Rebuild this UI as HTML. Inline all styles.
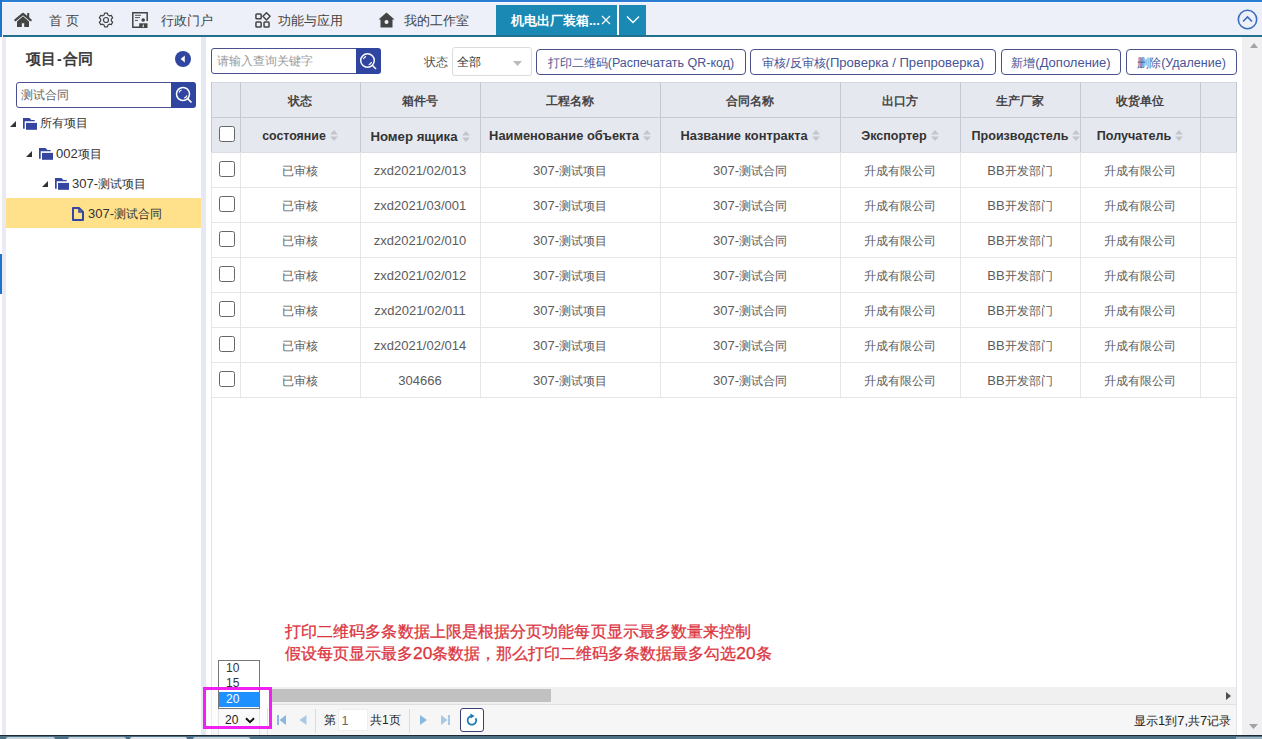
<!DOCTYPE html>
<html><head><meta charset="utf-8">
<style>
*{box-sizing:border-box;margin:0;padding:0}
html,body{width:1262px;height:739px;overflow:hidden;background:#fff;font-family:"Liberation Sans",sans-serif;color:#333}
.a{position:absolute}
.t{position:absolute;white-space:nowrap;line-height:1}
/* header */
#hdr{left:0;top:0;width:1262px;height:35px;background:#edf0f8}
#topline{left:0;top:0;width:1262px;height:2px;background:#2b7cd3}
#leftbar{left:0;top:0;width:2px;height:37px;background:#1f74c8}
#hdrb{left:3px;top:35px;width:1259px;height:2px;background:#22708c}
.hl{font-size:13px;color:#444}
#tab{left:496px;top:5px;width:121px;height:30px;background:#1a8ab5}
#tabdd{left:619px;top:5px;width:27px;height:30px;background:#1a8ab5}
/* sidebar */
#lstrip{left:2px;top:37px;width:4px;height:698px;background:#e9eaf3}
#div{left:201px;top:37px;width:5px;height:698px;background:#e6e9f3}
.inp{border:1px solid #4a4f8f;border-radius:3px;background:#fff}
.sbtn{background:#2f45a0;border-radius:0 3px 3px 0}
.tree{font-size:12px;color:#333}
/* main */
.btn{position:absolute;top:49px;height:26px;border:1px solid #4a5088;border-radius:4px;background:#fff;font-size:12px;color:#465496;line-height:26px;text-align:center;white-space:nowrap}
#tbl{left:211px;top:82px}
.hc{position:absolute;background:#e6e8f0;border-right:1px solid #cfd2dc;border-bottom:1px solid #cfd2dc;text-align:center;font-weight:bold;color:#333}
.dc{position:absolute;border-right:1px solid #e3e3e3;border-bottom:1px solid #e3e3e3;text-align:center;color:#555;font-size:13px;line-height:34px;white-space:nowrap}
.cb{position:absolute;width:16px;height:16px;border:1px solid #666;border-radius:2.5px;background:#fff}
.sort{position:absolute;width:8px;height:11px}
.hc1{font-size:12px;font-weight:bold;color:#444;text-align:center}
.hc2{font-size:12.6px;font-weight:bold;color:#333;text-align:center}
.srt{margin-left:4px;vertical-align:-1px}
.dc1{font-size:12px;color:#5c5c5c;text-align:center}
.l{font-size:108.3%}
.btn .l{font-size:104.5%}
</style></head><body>
<div class="a" id="hdr"></div>
<div class="a" id="topline"></div>
<div class="a" style="left:2px;top:2px;width:1260px;height:1px;background:#f3f8fc"></div>
<div class="a" id="leftbar"></div>
<div class="a" id="hdrb"></div>

<!-- header icons -->
<svg class="a" style="left:14px;top:12px" width="18" height="16" viewBox="0 0 18 16">
 <path d="M1.4 8.2L9 1.8L16.6 8.2" fill="none" stroke="#444" stroke-width="2.2" stroke-linecap="round" stroke-linejoin="round"/>
 <rect x="13.2" y="1" width="2" height="4.8" fill="#444"/>
 <path d="M3 9.4L9 4.3L15 9.4V15H10.2V11.3H7.8V15H3Z" fill="#444"/>
</svg>
<div class="t hl" style="left:49px;top:14px">首 页</div>
<svg class="a" style="left:98px;top:12px" width="16" height="16" viewBox="0 0 16 16">
 <path d="M6.10 2.95 L6.61 1.14 L9.39 1.14 L9.90 2.95 L11.43 3.83 L13.25 3.37 L14.64 5.77 L13.33 7.12 L13.33 8.88 L14.64 10.23 L13.25 12.63 L11.43 12.17 L9.90 13.05 L9.39 14.86 L6.61 14.86 L6.10 13.05 L4.57 12.17 L2.75 12.63 L1.36 10.23 L2.67 8.88 L2.67 7.12 L1.36 5.77 L2.75 3.37 L4.57 3.83Z" fill="none" stroke="#444" stroke-width="1.2" stroke-linejoin="round"/>
 <circle cx="8" cy="8" r="2.5" fill="none" stroke="#444" stroke-width="1.2"/>
</svg>
<svg class="a" style="left:132px;top:12px" width="16" height="16" viewBox="0 0 16 16">
 <path d="M8 15.2H0.8V0.8H15.2V9" fill="none" stroke="#444" stroke-width="1.5"/>
 <path d="M3 3.3h6M3 5.6h5M3 8.4h3" stroke="#555" stroke-width="1"/>
 <circle cx="11.2" cy="8" r="1.8" fill="#444"/>
 <path d="M7.2 16 L7.2 11.3 L15.5 11.3 L15.5 16Z" fill="#444"/>
 <path d="M11.2 11.3L10.5 14.5L11.2 15.5L11.9 14.5Z" fill="#edf0f8"/>
</svg>
<div class="t hl" style="left:161px;top:14px">行政门户</div>
<svg class="a" style="left:255px;top:12px" width="17" height="17" viewBox="0 0 17 17">
 <rect x="0.95" y="1.95" width="5.2" height="4.8" rx="0.8" fill="none" stroke="#444" stroke-width="1.5"/>
 <rect x="0.95" y="10.05" width="5.2" height="5" rx="0.8" fill="none" stroke="#444" stroke-width="1.5"/>
 <rect x="9.05" y="10.05" width="5" height="5" rx="0.8" fill="none" stroke="#444" stroke-width="1.5"/>
 <path d="M11.5 0.7L15.1 4.3L11.5 7.9L7.9 4.3Z" fill="none" stroke="#444" stroke-width="1.4" stroke-linejoin="round"/>
</svg>
<div class="t hl" style="left:278px;top:14px">功能与应用</div>
<svg class="a" style="left:378px;top:12px" width="17" height="16" viewBox="0 0 17 16">
 <path d="M8.5 0.5 L0.5 7.5 L2.5 7.5 L2.5 15.5 L14.5 15.5 L14.5 7.5 L16.5 7.5 Z" fill="#444"/>
 <circle cx="8.5" cy="10" r="2" fill="#edf0f8"/>
</svg>
<div class="t hl" style="left:404px;top:14px">我的工作室</div>
<div class="a" id="tab"></div>
<div class="t" style="left:511px;top:13.5px;font-size:13px;font-weight:bold;color:#fff">机电出厂装箱...</div>
<svg class="a" style="left:601px;top:15px" width="10" height="10" viewBox="0 0 10 10"><path d="M1 1L9 9M9 1L1 9" stroke="#fff" stroke-width="1.2"/></svg>
<div class="a" style="left:617px;top:5px;width:2px;height:30px;background:#fbfdff"></div>
<div class="a" id="tabdd"></div>
<svg class="a" style="left:626px;top:15px" width="14" height="9" viewBox="0 0 14 9"><path d="M1 1.5L7 7.5L13 1.5" fill="none" stroke="#fff" stroke-width="1.4"/></svg>
<svg class="a" style="left:1236.5px;top:8.5px" width="21" height="21" viewBox="0 0 21 21"><circle cx="10.5" cy="10.5" r="9.2" fill="none" stroke="#3a6cc0" stroke-width="1.6"/><path d="M6 12.5L10.5 8L15 12.5" fill="none" stroke="#3a6cc0" stroke-width="1.6"/></svg>

<!-- sidebar -->
<div class="a" id="lstrip"></div>
<div class="a" style="left:0;top:254px;width:2px;height:40px;background:#1f74c8"></div>
<div class="a" id="div"></div>
<div class="t" style="left:25.5px;top:52px;font-size:14.5px;color:#333;-webkit-text-stroke:0.55px #333">项目<span style="font-size:14px;font-weight:bold;-webkit-text-stroke:0;margin:0 1.6px">-</span>合同</div>
<svg class="a" style="left:175px;top:51px" width="16" height="16" viewBox="0 0 16 16"><circle cx="8" cy="8" r="8" fill="#2f45a0"/><path d="M9.8 4.5L5.6 8L9.8 11.5Z" fill="#fff"/></svg>
<div class="a inp" style="left:16px;top:82px;width:160px;height:26px"></div>
<div class="a sbtn" style="left:171px;top:82px;width:25px;height:26px"></div>
<svg class="a" style="left:174px;top:85px" width="20" height="20" viewBox="0 0 20 20"><circle cx="9" cy="9" r="6.5" fill="none" stroke="#fff" stroke-width="1.5"/><path d="M5.05 7.56A4.2 4.2 0 0 1 7.56 5.05 M12.95 10.44A4.2 4.2 0 0 1 10.09 13.06" fill="none" stroke="#fff" stroke-width="1.1"/><path d="M13.6 13.6L17.5 17.5" stroke="#fff" stroke-width="1.6"/></svg>
<div class="t" style="left:21px;top:89px;font-size:12px;color:#666">测试合同</div>


<!-- tree -->
<svg class="a" style="left:10px;top:121px" width="6" height="6" viewBox="0 0 6 6"><path d="M6 0L6 6L0 6Z" fill="#333"/></svg>
<svg class="a" style="left:23px;top:118px" width="14" height="12" viewBox="0 0 14 12"><path d="M0 0H6.5L8.3 2H11.7V3.3H1.7V10.8H0Z" fill="#3446a0"/><rect x="3" y="4.9" width="11" height="6.9" fill="#3446a0"/></svg>
<div class="t tree" style="left:40px;top:117px">所有项目</div>
<svg class="a" style="left:26px;top:151px" width="6" height="6" viewBox="0 0 6 6"><path d="M6 0L6 6L0 6Z" fill="#333"/></svg>
<svg class="a" style="left:39px;top:148px" width="14" height="12" viewBox="0 0 14 12"><path d="M0 0H6.5L8.3 2H11.7V3.3H1.7V10.8H0Z" fill="#3446a0"/><rect x="3" y="4.9" width="11" height="6.9" fill="#3446a0"/></svg>
<div class="t tree" style="left:56px;top:147px"><span class="l">002</span>项目</div>
<svg class="a" style="left:42px;top:181px" width="6" height="6" viewBox="0 0 6 6"><path d="M6 0L6 6L0 6Z" fill="#333"/></svg>
<svg class="a" style="left:55px;top:178px" width="14" height="12" viewBox="0 0 14 12"><path d="M0 0H6.5L8.3 2H11.7V3.3H1.7V10.8H0Z" fill="#3446a0"/><rect x="3" y="4.9" width="11" height="6.9" fill="#3446a0"/></svg>
<div class="t tree" style="left:72px;top:177px"><span class="l">307-</span>测试项目</div>
<div class="a" style="left:6px;top:198px;width:195px;height:30px;background:#ffe18c"></div>
<svg class="a" style="left:72px;top:207px" width="12" height="14" viewBox="0 0 12 14"><path d="M1 1H7L11 5V13H1Z" fill="none" stroke="#3446a0" stroke-width="2" stroke-linejoin="round"/><path d="M7 1V5H11" fill="none" stroke="#3446a0" stroke-width="1.6"/></svg>
<div class="t tree" style="left:88px;top:207px"><span class="l">307-</span>测试合同</div>

<!-- main toolbar -->
<div class="a inp" style="left:211px;top:48px;width:150px;height:26px"></div>
<div class="a sbtn" style="left:356px;top:48px;width:25px;height:26px"></div>
<svg class="a" style="left:358px;top:51px" width="20" height="20" viewBox="0 0 20 20"><circle cx="9.5" cy="9.5" r="6.8" fill="none" stroke="#fff" stroke-width="1.5"/><path d="M5.37 8.00A4.4 4.4 0 0 1 8.00 5.37 M13.63 11.00A4.4 4.4 0 0 1 10.64 13.75" fill="none" stroke="#fff" stroke-width="1.1"/><path d="M14.3 14.3L18 18" stroke="#fff" stroke-width="1.6"/></svg>
<div class="t" style="left:217px;top:55px;font-size:12px;color:#9a9a9a">请输入查询关键字</div>
<div class="t" style="left:424px;top:56px;font-size:12px;color:#555">状态</div>
<div class="a" style="left:452px;top:47px;width:80px;height:29px;border:1px solid #dcdcdc;border-radius:3px;background:#fff"></div>
<div class="t" style="left:457px;top:56px;font-size:12px;color:#333">全部</div>
<svg class="a" style="left:513px;top:61px" width="9" height="5" viewBox="0 0 9 5"><path d="M0 0H9L4.5 5Z" fill="#bbb"/></svg>
<div class="btn" style="left:536px;width:210px">打印二维码<span class="l" style="font-size:12.5px">(Распечатать QR-код)</span></div>
<div class="btn" style="left:750px;width:246px">审核<span class="l" style="font-size:13px">/</span>反审核<span class="l" style="font-size:13.1px">(Проверка / Препроверка)</span></div>
<div class="btn" style="left:1001px;width:120px">新增<span class="l" style="font-size:13px">(Дополение)</span></div>
<div class="btn" style="left:1126px;width:111px">删除<span class="l" style="font-size:12.5px">(Удаление)</span></div>

<!-- table -->
<div class="a" style="left:211px;top:82px;width:1026px;height:70px;background:#e6e8f0"></div>
<div class="a" style="left:211px;top:82px;width:1026px;height:1px;background:#d6d8e0"></div>
<div class="a" style="left:211px;top:117px;width:1026px;height:1px;background:#c9cbd4"></div>
<div class="a" style="left:211px;top:152px;width:1026px;height:1px;background:#dcdee6"></div>
<div class="a" style="left:211px;top:187px;width:1026px;height:1px;background:#e6e6e6"></div>
<div class="a" style="left:211px;top:222px;width:1026px;height:1px;background:#e6e6e6"></div>
<div class="a" style="left:211px;top:257px;width:1026px;height:1px;background:#e6e6e6"></div>
<div class="a" style="left:211px;top:292px;width:1026px;height:1px;background:#e6e6e6"></div>
<div class="a" style="left:211px;top:327px;width:1026px;height:1px;background:#e6e6e6"></div>
<div class="a" style="left:211px;top:362px;width:1026px;height:1px;background:#e6e6e6"></div>
<div class="a" style="left:211px;top:397px;width:1026px;height:1px;background:#e6e6e6"></div>
<div class="a" style="left:211px;top:82px;width:1px;height:70px;background:#c6c8d1"></div>
<div class="a" style="left:211px;top:152px;width:1px;height:245px;background:#e6e6e6"></div>
<div class="a" style="left:240px;top:82px;width:1px;height:70px;background:#c6c8d1"></div>
<div class="a" style="left:240px;top:152px;width:1px;height:245px;background:#e6e6e6"></div>
<div class="a" style="left:360px;top:82px;width:1px;height:70px;background:#c6c8d1"></div>
<div class="a" style="left:360px;top:152px;width:1px;height:245px;background:#e6e6e6"></div>
<div class="a" style="left:480px;top:82px;width:1px;height:70px;background:#c6c8d1"></div>
<div class="a" style="left:480px;top:152px;width:1px;height:245px;background:#e6e6e6"></div>
<div class="a" style="left:660px;top:82px;width:1px;height:70px;background:#c6c8d1"></div>
<div class="a" style="left:660px;top:152px;width:1px;height:245px;background:#e6e6e6"></div>
<div class="a" style="left:840px;top:82px;width:1px;height:70px;background:#c6c8d1"></div>
<div class="a" style="left:840px;top:152px;width:1px;height:245px;background:#e6e6e6"></div>
<div class="a" style="left:960px;top:82px;width:1px;height:70px;background:#c6c8d1"></div>
<div class="a" style="left:960px;top:152px;width:1px;height:245px;background:#e6e6e6"></div>
<div class="a" style="left:1080px;top:82px;width:1px;height:70px;background:#c6c8d1"></div>
<div class="a" style="left:1080px;top:152px;width:1px;height:245px;background:#e6e6e6"></div>
<div class="a" style="left:1200px;top:82px;width:1px;height:70px;background:#c6c8d1"></div>
<div class="a" style="left:1200px;top:152px;width:1px;height:245px;background:#e6e6e6"></div>
<div class="a" style="left:1236px;top:82px;width:1px;height:70px;background:#c6c8d1"></div>
<div class="a" style="left:1236px;top:152px;width:1px;height:245px;background:#e6e6e6"></div>
<div class="t hc1" style="left:240px;width:120px;top:95px">状态</div>
<div class="t hc2" style="left:240px;width:120px;top:130px"><span style="font-size:12.4px">состояние</span><svg class="srt" width="8" height="11" viewBox="0 0 8 11"><path d="M4 0L8 4.5H0Z M0 6.5H8L4 11Z" fill="#c4c6cc"/></svg></div>
<div class="t hc1" style="left:360px;width:120px;top:95px">箱件号</div>
<div class="t hc2" style="left:360px;width:120px;top:130px"><span style="font-size:13.2px">Номер ящика</span><svg class="srt" width="8" height="11" viewBox="0 0 8 11"><path d="M4 0L8 4.5H0Z M0 6.5H8L4 11Z" fill="#c4c6cc"/></svg></div>
<div class="t hc1" style="left:480px;width:180px;top:95px">工程名称</div>
<div class="t hc2" style="left:480px;width:180px;top:130px"><span style="font-size:12.85px">Наименование объекта</span><svg class="srt" width="8" height="11" viewBox="0 0 8 11"><path d="M4 0L8 4.5H0Z M0 6.5H8L4 11Z" fill="#c4c6cc"/></svg></div>
<div class="t hc1" style="left:660px;width:180px;top:95px">合同名称</div>
<div class="t hc2" style="left:660px;width:180px;top:130px"><span style="font-size:12.85px">Название контракта</span><svg class="srt" width="8" height="11" viewBox="0 0 8 11"><path d="M4 0L8 4.5H0Z M0 6.5H8L4 11Z" fill="#c4c6cc"/></svg></div>
<div class="t hc1" style="left:840px;width:120px;top:95px">出口方</div>
<div class="t hc2" style="left:840px;width:120px;top:130px"><span style="font-size:12.55px">Экспортер</span><svg class="srt" width="8" height="11" viewBox="0 0 8 11"><path d="M4 0L8 4.5H0Z M0 6.5H8L4 11Z" fill="#c4c6cc"/></svg></div>
<div class="t hc1" style="left:960px;width:120px;top:95px">生产厂家</div>
<div class="t hc2" style="left:966px;width:120px;top:130px"><span style="font-size:12.55px">Производстель</span><svg class="srt" width="8" height="11" viewBox="0 0 8 11"><path d="M4 0L8 4.5H0Z M0 6.5H8L4 11Z" fill="#c4c6cc"/></svg></div>
<div class="t hc1" style="left:1080px;width:120px;top:95px">收货单位</div>
<div class="t hc2" style="left:1080px;width:120px;top:130px"><span style="font-size:12.6px">Получатель</span><svg class="srt" width="8" height="11" viewBox="0 0 8 11"><path d="M4 0L8 4.5H0Z M0 6.5H8L4 11Z" fill="#c4c6cc"/></svg></div>
<div class="cb" style="left:219px;top:126px"></div>
<div class="cb" style="left:219px;top:161px"></div>
<div class="t dc1" style="left:240px;width:120px;top:165px">已审核</div>
<div class="t dc1" style="left:360px;width:120px;top:164px"><span class="l">zxd2021/02/013</span></div>
<div class="t dc1" style="left:480px;width:180px;top:164px"><span class="l">307-</span>测试项目</div>
<div class="t dc1" style="left:660px;width:180px;top:164px"><span class="l">307-</span>测试合同</div>
<div class="t dc1" style="left:840px;width:120px;top:165px">升成有限公司</div>
<div class="t dc1" style="left:960px;width:120px;top:164px"><span class="l">BB</span>开发部门</div>
<div class="t dc1" style="left:1080px;width:120px;top:165px">升成有限公司</div>
<div class="cb" style="left:219px;top:196px"></div>
<div class="t dc1" style="left:240px;width:120px;top:200px">已审核</div>
<div class="t dc1" style="left:360px;width:120px;top:199px"><span class="l">zxd2021/03/001</span></div>
<div class="t dc1" style="left:480px;width:180px;top:199px"><span class="l">307-</span>测试项目</div>
<div class="t dc1" style="left:660px;width:180px;top:199px"><span class="l">307-</span>测试合同</div>
<div class="t dc1" style="left:840px;width:120px;top:200px">升成有限公司</div>
<div class="t dc1" style="left:960px;width:120px;top:199px"><span class="l">BB</span>开发部门</div>
<div class="t dc1" style="left:1080px;width:120px;top:200px">升成有限公司</div>
<div class="cb" style="left:219px;top:231px"></div>
<div class="t dc1" style="left:240px;width:120px;top:235px">已审核</div>
<div class="t dc1" style="left:360px;width:120px;top:234px"><span class="l">zxd2021/02/010</span></div>
<div class="t dc1" style="left:480px;width:180px;top:234px"><span class="l">307-</span>测试项目</div>
<div class="t dc1" style="left:660px;width:180px;top:234px"><span class="l">307-</span>测试合同</div>
<div class="t dc1" style="left:840px;width:120px;top:235px">升成有限公司</div>
<div class="t dc1" style="left:960px;width:120px;top:234px"><span class="l">BB</span>开发部门</div>
<div class="t dc1" style="left:1080px;width:120px;top:235px">升成有限公司</div>
<div class="cb" style="left:219px;top:266px"></div>
<div class="t dc1" style="left:240px;width:120px;top:270px">已审核</div>
<div class="t dc1" style="left:360px;width:120px;top:269px"><span class="l">zxd2021/02/012</span></div>
<div class="t dc1" style="left:480px;width:180px;top:269px"><span class="l">307-</span>测试项目</div>
<div class="t dc1" style="left:660px;width:180px;top:269px"><span class="l">307-</span>测试合同</div>
<div class="t dc1" style="left:840px;width:120px;top:270px">升成有限公司</div>
<div class="t dc1" style="left:960px;width:120px;top:269px"><span class="l">BB</span>开发部门</div>
<div class="t dc1" style="left:1080px;width:120px;top:270px">升成有限公司</div>
<div class="cb" style="left:219px;top:301px"></div>
<div class="t dc1" style="left:240px;width:120px;top:305px">已审核</div>
<div class="t dc1" style="left:360px;width:120px;top:304px"><span class="l">zxd2021/02/011</span></div>
<div class="t dc1" style="left:480px;width:180px;top:304px"><span class="l">307-</span>测试项目</div>
<div class="t dc1" style="left:660px;width:180px;top:304px"><span class="l">307-</span>测试合同</div>
<div class="t dc1" style="left:840px;width:120px;top:305px">升成有限公司</div>
<div class="t dc1" style="left:960px;width:120px;top:304px"><span class="l">BB</span>开发部门</div>
<div class="t dc1" style="left:1080px;width:120px;top:305px">升成有限公司</div>
<div class="cb" style="left:219px;top:336px"></div>
<div class="t dc1" style="left:240px;width:120px;top:340px">已审核</div>
<div class="t dc1" style="left:360px;width:120px;top:339px"><span class="l">zxd2021/02/014</span></div>
<div class="t dc1" style="left:480px;width:180px;top:339px"><span class="l">307-</span>测试项目</div>
<div class="t dc1" style="left:660px;width:180px;top:339px"><span class="l">307-</span>测试合同</div>
<div class="t dc1" style="left:840px;width:120px;top:340px">升成有限公司</div>
<div class="t dc1" style="left:960px;width:120px;top:339px"><span class="l">BB</span>开发部门</div>
<div class="t dc1" style="left:1080px;width:120px;top:340px">升成有限公司</div>
<div class="cb" style="left:219px;top:371px"></div>
<div class="t dc1" style="left:240px;width:120px;top:375px">已审核</div>
<div class="t dc1" style="left:360px;width:120px;top:374px"><span class="l">304666</span></div>
<div class="t dc1" style="left:480px;width:180px;top:374px"><span class="l">307-</span>测试项目</div>
<div class="t dc1" style="left:660px;width:180px;top:374px"><span class="l">307-</span>测试合同</div>
<div class="t dc1" style="left:840px;width:120px;top:375px">升成有限公司</div>
<div class="t dc1" style="left:960px;width:120px;top:374px"><span class="l">BB</span>开发部门</div>
<div class="t dc1" style="left:1080px;width:120px;top:375px">升成有限公司</div>

<!-- panel borders -->
<div class="a" style="left:211px;top:397px;width:1px;height:338px;background:#e3e3e6"></div>
<div class="a" style="left:1236px;top:397px;width:1px;height:338px;background:#e3e3e6"></div>
<!-- vertical scrollbar -->
<div class="a" style="left:1242px;top:37px;width:20px;height:698px;background:#f0f0f3"></div>
<svg class="a" style="left:1250px;top:43px" width="8" height="5" viewBox="0 0 8 5"><path d="M4 0L8 5H0Z" fill="#a3a3a3"/></svg>
<svg class="a" style="left:1249px;top:724px" width="9" height="5" viewBox="0 0 9 5"><path d="M0 0H9L4.5 5Z" fill="#a3a3a3"/></svg>
<!-- red text -->
<div class="t" style="left:285px;top:624px;font-size:16px;color:#dc3540;-webkit-text-stroke:0.3px #dc3540;letter-spacing:0.08px">打印二维码多条数据上限是根据分页功能每页显示最多数量来控制</div>
<div class="t" style="left:285px;top:645px;font-size:16px;color:#dc3540;-webkit-text-stroke:0.3px #dc3540">假设每页显示最多<span class="l">20</span>条数据，那么打印二维码多条数据最多勾选<span class="l">20</span>条</div>
<!-- h scrollbar -->
<div class="a" style="left:212px;top:687px;width:1024px;height:17px;background:#f0f0f0"></div>
<div class="a" style="left:212px;top:689px;width:339px;height:13px;background:#c1c1c1"></div>
<svg class="a" style="left:1226px;top:692px" width="5" height="8" viewBox="0 0 5 8"><path d="M0 0L5 4L0 8Z" fill="#505050"/></svg>
<div class="a" style="left:212px;top:704px;width:1024px;height:1px;background:#e0e0e0"></div>
<!-- pagination -->
<div class="a" style="left:212px;top:705px;width:1024px;height:30px;background:#f6f6f6"></div>
<div class="a" style="left:206px;top:690px;width:63px;height:36px;background:#fdfdfd"></div>
<div class="a" style="left:211px;top:690px;width:1px;height:45px;background:#ececec"></div>
<div class="a" style="left:218px;top:708px;width:42px;height:27px;border:1px solid #e2e2e2;border-bottom:none;background:#fafafa"></div>
<div class="t" style="left:225px;top:714px;font-size:12px;color:#222">20</div>
<svg class="a" style="left:245px;top:717px" width="10" height="7" viewBox="0 0 10 7"><path d="M1 1.2L5 5.2L9 1.2" fill="none" stroke="#111" stroke-width="2"/></svg>
<div class="a" style="left:267px;top:708px;width:1px;height:27px;background:#e0e0e0"></div>
<svg class="a" style="left:277px;top:715px" width="9" height="10" viewBox="0 0 9 10"><rect x="0" y="0" width="2" height="10" fill="#8ab8e0"/><path d="M9 0V10L2.5 5Z" fill="#8ab8e0"/></svg>
<svg class="a" style="left:299px;top:715px" width="8" height="10" viewBox="0 0 8 10"><path d="M7.5 0V10L0.5 5Z" fill="#a8c8e6"/></svg>
<div class="a" style="left:315px;top:709px;width:1px;height:24px;background:#dcdcdc"></div>
<div class="t" style="left:324px;top:714px;font-size:12px;color:#222">第</div>
<div class="a" style="left:338px;top:709px;width:30px;height:22px;border:1px solid #eee;background:#fff"></div>
<div class="t" style="left:341.5px;top:715px;font-size:12.5px;color:#666">1</div>
<div class="t" style="left:370px;top:714px;font-size:12px;color:#222">共1页</div>
<div class="a" style="left:409px;top:709px;width:1px;height:24px;background:#dcdcdc"></div>
<svg class="a" style="left:420px;top:715px" width="7" height="10" viewBox="0 0 7 10"><path d="M0 0V10L7 5Z" fill="#8ab8e0"/></svg>
<svg class="a" style="left:441px;top:715px" width="9" height="10" viewBox="0 0 9 10"><path d="M0 0V10L6.5 5Z" fill="#a8c8e6"/><rect x="7" y="0" width="2" height="10" fill="#a8c8e6"/></svg>
<div class="a" style="left:460px;top:708px;width:24px;height:24px;border:1px solid #3c4070;border-radius:3px;background:#fff"></div>
<svg class="a" style="left:465px;top:713px" width="14" height="14" viewBox="0 0 14 14"><path d="M10.6 5.2A4.3 4.3 0 1 1 6.6 3.1" fill="none" stroke="#1e7ab0" stroke-width="1.8"/><path d="M5.4 0.6L9.6 3.0L5.6 5.6Z" fill="#1e7ab0"/></svg>
<div class="t" style="left:1134px;top:714px;font-size:12px;color:#222">显示<span class="l">1</span>到<span class="l">7,</span>共<span class="l">7</span>记录</div>
<!-- dropdown list -->
<div class="a" style="left:218px;top:660px;width:42px;height:49px;border:1px solid #777;background:#fff"></div>
<div class="t" style="left:226px;top:662px;font-size:12px;color:#333">10</div>
<div class="t" style="left:226px;top:677px;font-size:12px;color:#333">15</div>
<div class="a" style="left:219px;top:692px;width:40px;height:15px;background:#1e90ff"></div>
<div class="t" style="left:226px;top:693px;font-size:12px;color:#fff">20</div>
<!-- magenta box -->
<div class="a" style="left:203px;top:687px;width:69px;height:42px;border:3px solid #f020f0"></div>
<!-- bottom strip -->
<div class="a" style="left:0;top:735px;width:1262px;height:4px;background:#4d6f84"></div>
<div class="a" style="left:0;top:735px;width:1262px;height:1px;background:#1d2a33"></div>
<div class="a" style="left:6px;top:737px;width:49px;height:2px;background:#c9d3da;border-radius:2px 2px 0 0"></div>
<div class="a" style="left:68px;top:737px;width:58px;height:2px;background:#c9d3da;border-radius:2px 2px 0 0"></div>
<div class="a" style="left:130px;top:737px;width:57px;height:2px;background:#dfe5ea;border-radius:2px 2px 0 0"></div>
<div class="a" style="left:193px;top:737px;width:57px;height:2px;background:#c9d3da;border-radius:2px 2px 0 0"></div>
<div class="a" style="left:1236px;top:737px;width:26px;height:2px;background:#9fb2be"></div>
</body></html>
